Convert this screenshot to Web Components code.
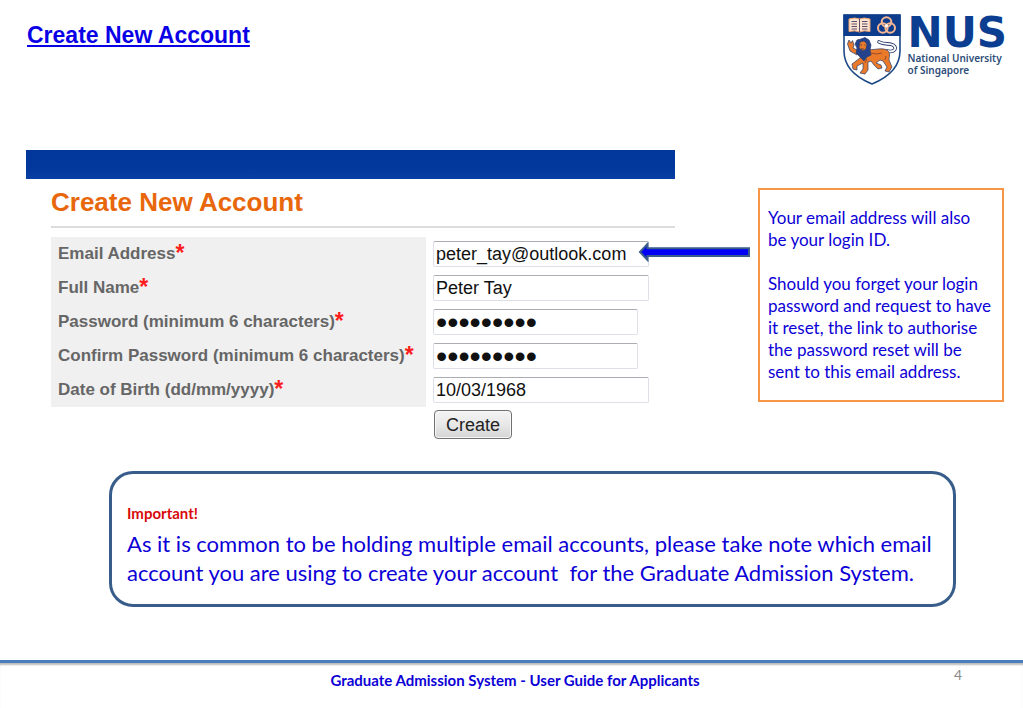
<!DOCTYPE html>
<html lang="en">
<head>
<meta charset="utf-8">
<title>Create New Account</title>
<style>
    body {
        margin: 0;
        background: #fff;
        font-family: Lato, "Liberation Sans", sans-serif;
        font-variant-ligatures: none;
    }
</style>
</head>
<body>
<guide-page>
    <slide-header slot="header">Create New Account</slide-header>
    <account-form heading="Create New Account">
        <form-row label="Email Address" value="peter_tay@outlook.com"></form-row>
        <form-row label="Full Name" value="Peter Tay"></form-row>
        <form-row label="Password (minimum 6 characters)" type="password" value="applicant"></form-row>
        <form-row label="Confirm Password (minimum 6 characters)" type="password" value="applicant"></form-row>
        <form-row label="Date of Birth (dd/mm/yyyy)" value="10/03/1968"></form-row>
    </account-form>
    <call-out slot="aside">
        <p>Your email address will also<br>be your login ID.</p>
        <p>Should you forget your login password and request to have it reset, the link to authorise the password reset will be sent to this email address.</p>
    </call-out>
    <important-note slot="note" heading="Important!">As it is common to be holding multiple email accounts, please take note which email account you are using to create your account&nbsp; for the Graduate Admission System.</important-note>
    <slide-footer slot="footer" page="4">Graduate Admission System - User Guide for Applicants</slide-footer>
</guide-page>

<script>
class GuidePage extends HTMLElement {
    constructor() {
        super();
        this.attachShadow({ mode: 'open' });
    }

    connectedCallback() {
        this.shadowRoot.innerHTML = `
            <style>
                :host {
                    display: flex;
                    flex-direction: column;
                    min-height: 100vh;
                }

                main {
                    display: flex;
                    flex-direction: column;
                    gap: 32px;
                    padding-top: 60px;
                }

                .content {
                    display: grid;
                    grid-template-columns: minmax(0, 1fr) 246px;
                    gap: 83px;
                    align-items: start;
                    padding: 0 19px 0 26px;
                }

                .aside {
                    padding-top: 38px;
                }

                .note {
                    padding: 0 67px 0 109px;
                }

                .footer {
                    margin-top: auto;
                }
            </style>

            <slot name="header"></slot>
            <main>
                <div class="content">
                    <slot></slot>
                    <div class="aside"><slot name="aside"></slot></div>
                </div>
                <div class="note"><slot name="note"></slot></div>
            </main>
            <div class="footer"><slot name="footer"></slot></div>
        `;
    }
}

class SlideHeader extends HTMLElement {
    constructor() {
        super();
        this.attachShadow({ mode: 'open' });
    }

    connectedCallback() {
        this.shadowRoot.innerHTML = `
            <style>
                :host {
                    display: block;
                }

                header {
                    display: flex;
                    justify-content: space-between;
                    align-items: flex-start;
                    height: 90px;
                    padding: 0 16px 0 27px;
                }

                h1 {
                    margin: 0;
                    padding-top: 21px;
                    font: bold 23px/28px "Liberation Sans", Arial, sans-serif;
                    color: #0a00e6;
                    text-decoration: underline;
                }
            </style>

            <header>
                <h1><slot></slot></h1>
                <nus-logo></nus-logo>
            </header>
        `;
    }
}

class NusLogo extends HTMLElement {
    constructor() {
        super();
        this.attachShadow({ mode: 'open' });
    }

    connectedCallback() {
        this.shadowRoot.innerHTML = `
            <style>
                :host {
                    display: flex;
                    gap: 6px;
                    padding-top: 14px;
                }

                svg {
                    display: block;
                    width: 58px;
                    height: 71px;
                }

                .name {
                    font-family: "DejaVu Sans", sans-serif;
                    font-size: 42px;
                    line-height: 38px;
                    font-weight: 700;
                    color: #0b3d91;
                }

                .full {
                    font-family: "Noto Sans", "Open Sans", sans-serif;
                    font-size: 10px;
                    line-height: 12px;
                    font-weight: 600;
                    color: #2d4d78;
                }
            </style>

            <svg viewBox="0 0 58 71" aria-hidden="true">
                <path d="M1 1H57V37C57 53 46 63 29 70C12 63 1 53 1 37Z" fill="#fff" stroke="#1c4a86" stroke-width="1.6"/>
                <path d="M.5 .5H57.5V22H.5Z" fill="#0d3c8c"/>
                <!-- open book -->
                <path d="M6 5Q12 3 16.500 5Q21 3 27 5V17.500Q21 16 16.500 18Q12 16 6 17.500Z" fill="#fbe5d2" stroke="#f3a06a" stroke-width="1"/>
                <path d="M16.500 5V18M8.500 7.500H14M8.500 10H14M8.500 12.500H14M8.500 15H14M19 7.500H24.500M19 10H24.500M19 12.500H24.500M19 15H24.500" stroke="#5e4d68" stroke-width="1" fill="none"/>
                <!-- three rings -->
                <g fill="none" stroke="#f6b792" stroke-width="2">
                    <circle cx="43.500" cy="8" r="4.800"/>
                    <circle cx="39.800" cy="14" r="4.800"/>
                    <circle cx="47.200" cy="14" r="4.800"/>
                </g>
                <circle cx="43.500" cy="11.800" r="1.500" fill="#fff"/>
                <!-- lion -->
                <g stroke="#293c6c" stroke-width=".7" stroke-linejoin="round">
                    <path d="M44 37C51 39 55 34 50 31C46 29 42 31 36 28" fill="none" stroke="#293c6c" stroke-width="3.600" stroke-linecap="round"/>
                    <path d="M44 37C51 39 55 34 50 31C46 29 42 31 36 28" fill="none" stroke="#fff" stroke-width="1.900" stroke-linecap="round"/>
                    <path d="M14 41L7 37L4.500 30L6 26L8 29L9.500 26.500L11 31L10 34L16 37Z" fill="#ea7a29"/>
                    <path d="M23 35C30 37 38 33 44 36C48 39 46 43 46 46L49 53L46 58L42 57L44 53L40 47L37 46L33 49L38 51L39 54L35 55L31 51L28 47L25 48L25 56L22 60L17 59L20 55L20 49L14 52L14 56L10 55L9 50L17 44Z" fill="#ea7a29"/>
                    <path d="M18 25L22 23.500L26 26L28 31L27 36L28 41L24 43L21 47L17 43L13 39L14 34L12 30L14 26Z" fill="#24438c"/>
                    <path d="M17 28L21 27L24 30L23 35L20 37L16 34Z" fill="#ea7a29"/>
                </g>
                <path d="M17.500 31H19M21.500 31H22.500M18 35H21" stroke="#213460" stroke-width=".8"/>
                <path d="M28 39Q33 41 39 39M24 45L22 49M43 42L42 46" fill="none" stroke="#8e482b" stroke-width=".9"/>
            </svg>
            <div>
                <div class="name">NUS</div>
                <div class="full">National University<br>of Singapore</div>
            </div>
        `;
    }
}

class AccountForm extends HTMLElement {
    constructor() {
        super();
        this.attachShadow({ mode: 'open' });
    }

    connectedCallback() {
        this.shadowRoot.innerHTML = `
            <style>
                :host {
                    display: block;
                    font-family: "Liberation Sans", Arial, sans-serif;
                }

                .bar {
                    height: 29px;
                    background: linear-gradient(#02379b 60%, #0a3fa5);
                }

                form {
                    padding-left: 25px;
                }

                h2 {
                    margin: 0 0 9px;
                    padding: 8px 0 9px;
                    border-bottom: 2px solid #dcdcdc;
                    font-size: 26px;
                    line-height: 30px;
                    color: #e8670c;
                }

                .actions {
                    display: flex;
                    padding: 3px 0 0 383px;
                }

                button {
                    width: 78px;
                    height: 29px;
                    padding: 0;
                    border: 1px solid #707070;
                    border-radius: 4px;
                    background: linear-gradient(#f4f4f4, #e8e8e8 50%, #d4d4d4);
                    box-shadow: inset 0 0 0 1px #f8f8f8;
                    font: 18px/24px "Liberation Sans", Arial, sans-serif;
                    color: #222;
                }
            </style>

            <div class="bar"></div>
            <form>
                <h2>${this.getAttribute('heading')}</h2>
                <slot></slot>
                <div class="actions"><button type="button">Create</button></div>
            </form>
        `;
    }
}

class FormRow extends HTMLElement {
    constructor() {
        super();
        this.attachShadow({ mode: 'open' });
    }

    connectedCallback() {
        const type = this.getAttribute('type') || 'text';

        this.shadowRoot.innerHTML = `
            <style>
                :host {
                    display: grid;
                    grid-template-columns: 375px 216px;
                    column-gap: 7px;
                    align-items: center;
                }

                label {
                    padding: 5px 0 5px 7px;
                    background: #f0f0f0;
                    font-size: 17px;
                    line-height: 24px;
                    font-weight: 700;
                    color: #666;
                    white-space: nowrap;
                }

                .required {
                    font-size: 23px;
                    line-height: 20px;
                    vertical-align: -2px;
                    color: #fb1c1c;
                }

                input {
                    box-sizing: border-box;
                    width: 216px;
                    height: 26px;
                    padding: 0 2px;
                    border: 1px solid #dde0e8;
                    border-top-color: #abadb3;
                    border-radius: 2px;
                    background: #fff;
                    font: 18px/24px "Liberation Sans", Arial, sans-serif;
                    color: #111;
                }

                input[type="password"] {
                    width: 205px;
                    font-size: 32px;
                }
            </style>

            <label for="field">${this.getAttribute('label')}<span class="required">*</span></label>
            <input id="field" type="${type}" value="${this.getAttribute('value')}">
        `;
    }
}

class CallOut extends HTMLElement {
    constructor() {
        super();
        this.attachShadow({ mode: 'open' });
    }

    connectedCallback() {
        this.shadowRoot.innerHTML = `
            <style>
                :host {
                    display: block;
                    position: relative;
                    padding: 17px 8px;
                    border: 2px solid #f79646;
                    font-size: 17px;
                    line-height: 22px;
                    color: #0c00d6;
                }

                ::slotted(p) {
                    margin: 0 0 22px;
                }

                ::slotted(p:last-child) {
                    margin-bottom: 0;
                }

                /* points at the email field of the form */
                svg {
                    position: absolute;
                    top: 52px;
                    right: calc(100% + 10px);
                    width: 112px;
                    height: 20px;
                }
            </style>

            <svg viewBox="0 0 112 20" aria-hidden="true">
                <path d="M2 10L9.500 2V6.300H111V14H9.500V18Z" fill="#0000f5" stroke="#385d8a" stroke-width="2"/>
            </svg>
            <slot></slot>
        `;
    }
}

class ImportantNote extends HTMLElement {
    constructor() {
        super();
        this.attachShadow({ mode: 'open' });
    }

    connectedCallback() {
        this.shadowRoot.innerHTML = `
            <style>
                :host {
                    display: block;
                    padding: 30px 15px 17px;
                    border: 3px solid #385d8a;
                    border-radius: 24px;
                    color: #0c00d6;
                }

                h3 {
                    margin: 0 0 7px;
                    font-size: 15px;
                    line-height: 18px;
                    color: #d90a0a;
                }

                p {
                    margin: 0;
                    font-size: 22px;
                    line-height: 29px;
                }
            </style>

            <h3>${this.getAttribute('heading')}</h3>
            <p><slot></slot></p>
        `;
    }
}

class SlideFooter extends HTMLElement {
    constructor() {
        super();
        this.attachShadow({ mode: 'open' });
    }

    connectedCallback() {
        this.shadowRoot.innerHTML = `
            <style>
                :host {
                    display: block;
                }

                footer {
                    display: grid;
                    grid-template-columns: 1fr auto 1fr;
                    height: 45px;
                    padding: 0 61px 0 68px;
                    border-top: 3px solid #4a7ebb;
                    box-shadow: inset 0 3px 2px -1px #bbb;
                    font-size: 15px;
                }

                .title {
                    grid-column: 2;
                    padding-top: 8px;
                    font-weight: 700;
                    line-height: 18px;
                    color: #0c00d6;
                }

                .page {
                    padding-top: 3px;
                    font-size: 14px;
                    line-height: 18px;
                    text-align: right;
                    color: #8b8b8b;
                }
            </style>

            <footer>
                <span class="title"><slot></slot></span>
                <span class="page">${this.getAttribute('page')}</span>
            </footer>
        `;
    }
}

customElements.define('guide-page', GuidePage);
customElements.define('slide-header', SlideHeader);
customElements.define('nus-logo', NusLogo);
customElements.define('account-form', AccountForm);
customElements.define('form-row', FormRow);
customElements.define('call-out', CallOut);
customElements.define('important-note', ImportantNote);
customElements.define('slide-footer', SlideFooter);
</script>
</body>
</html>
